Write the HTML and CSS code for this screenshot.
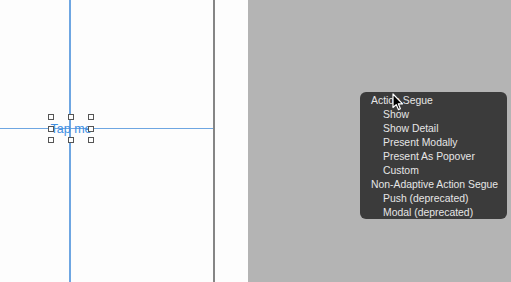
FILE: index.html
```html
<!DOCTYPE html>
<html lang="en">
<head>
  <meta charset="UTF-8">
  <title>Action Segue</title>
  <link rel="stylesheet" href="styles.css">
</head>
<body>
  <div class="editor">
    <div class="scene">
      <div class="guide guide-v"></div>
      <div class="guide guide-h"></div>
      <div class="button-sel">
        <span class="label">Tap me</span>
        <span class="handle h-tl"></span>
        <span class="handle h-tc"></span>
        <span class="handle h-tr"></span>
        <span class="handle h-ml"></span>
        <span class="handle h-mr"></span>
        <span class="handle h-bl"></span>
        <span class="handle h-bc"></span>
        <span class="handle h-br"></span>
      </div>
    </div>
    <div class="divider"></div>
    <div class="gap"></div>
    <div class="board">
      <ul class="menu">
        <li class="head">Action Segue</li>
        <li>Show</li>
        <li>Show Detail</li>
        <li>Present Modally</li>
        <li>Present As Popover</li>
        <li>Custom</li>
        <li class="head">Non-Adaptive Action Segue</li>
        <li>Push (deprecated)</li>
        <li>Modal (deprecated)</li>
      </ul>
      <svg class="cursor" width="12" height="18" viewBox="0 0 12 18">
        <path d="M1 1 L1 14.5 L4.2 11.6 L6.4 16.6 L8.4 15.7 L6.3 10.8 L10.6 10.8 Z" fill="#000" stroke="#fff" stroke-width="1.2" stroke-linejoin="round"/>
      </svg>
    </div>
  </div>
</body>
</html>
```

FILE: styles.css
```css
html, body {
  margin: 0;
  height: 100%;
}
body {
  background-color: #fdfdfd;
  font-family: "Liberation Sans", Arial, sans-serif;
  overflow: hidden;
}
.editor {
  display: flex;
  height: 282px;
}
.scene {
  position: relative;
  width: 213px;
}
.divider {
  width: 2px;
  background-color: #858585;
}
.gap {
  width: 33px;
}
.board {
  position: relative;
  flex: 1;
  background-color: #b4b4b4;
}
.guide {
  position: absolute;
  background-color: #6ea6e2;
}
.guide-v {
  left: 69px;
  top: 0;
  bottom: 0;
  width: 1.5px;
}
.guide-h {
  left: 0;
  right: 0;
  top: 127.5px;
  height: 1.5px;
}
.button-sel {
  position: absolute;
  left: 51px;
  top: 117px;
  width: 40px;
  height: 23px;
  display: flex;
  align-items: center;
  justify-content: center;
}
.label {
  color: #3f8fe3;
  font-size: 12.5px;
  white-space: nowrap;
}
.handle {
  position: absolute;
  width: 4px;
  height: 4px;
  border: 1px solid #555;
  background-color: #fdfdfd;
}
.h-tl, .h-ml, .h-bl { left: -3px; }
.h-tc, .h-bc { left: 17px; }
.h-tr, .h-mr, .h-br { left: 37px; }
.h-tl, .h-tc, .h-tr { top: -3px; }
.h-ml, .h-mr { top: 9px; }
.h-bl, .h-bc, .h-br { top: 20px; }
.menu {
  position: absolute;
  left: 112px;
  top: 92px;
  width: 147px;
  margin: 0;
  padding: 2px 0 0;
  list-style: none;
  background-color: #3b3b3b;
  border-radius: 6px;
  box-sizing: border-box;
  height: 127px;
}
.menu li {
  height: 14px;
  line-height: 14px;
  font-size: 10.4px;
  color: #e6e6e6;
  padding-left: 23px;
  white-space: nowrap;
}
.menu li.head {
  padding-left: 11px;
}
.cursor {
  position: absolute;
  left: 144px;
  top: 93px;
}
```
